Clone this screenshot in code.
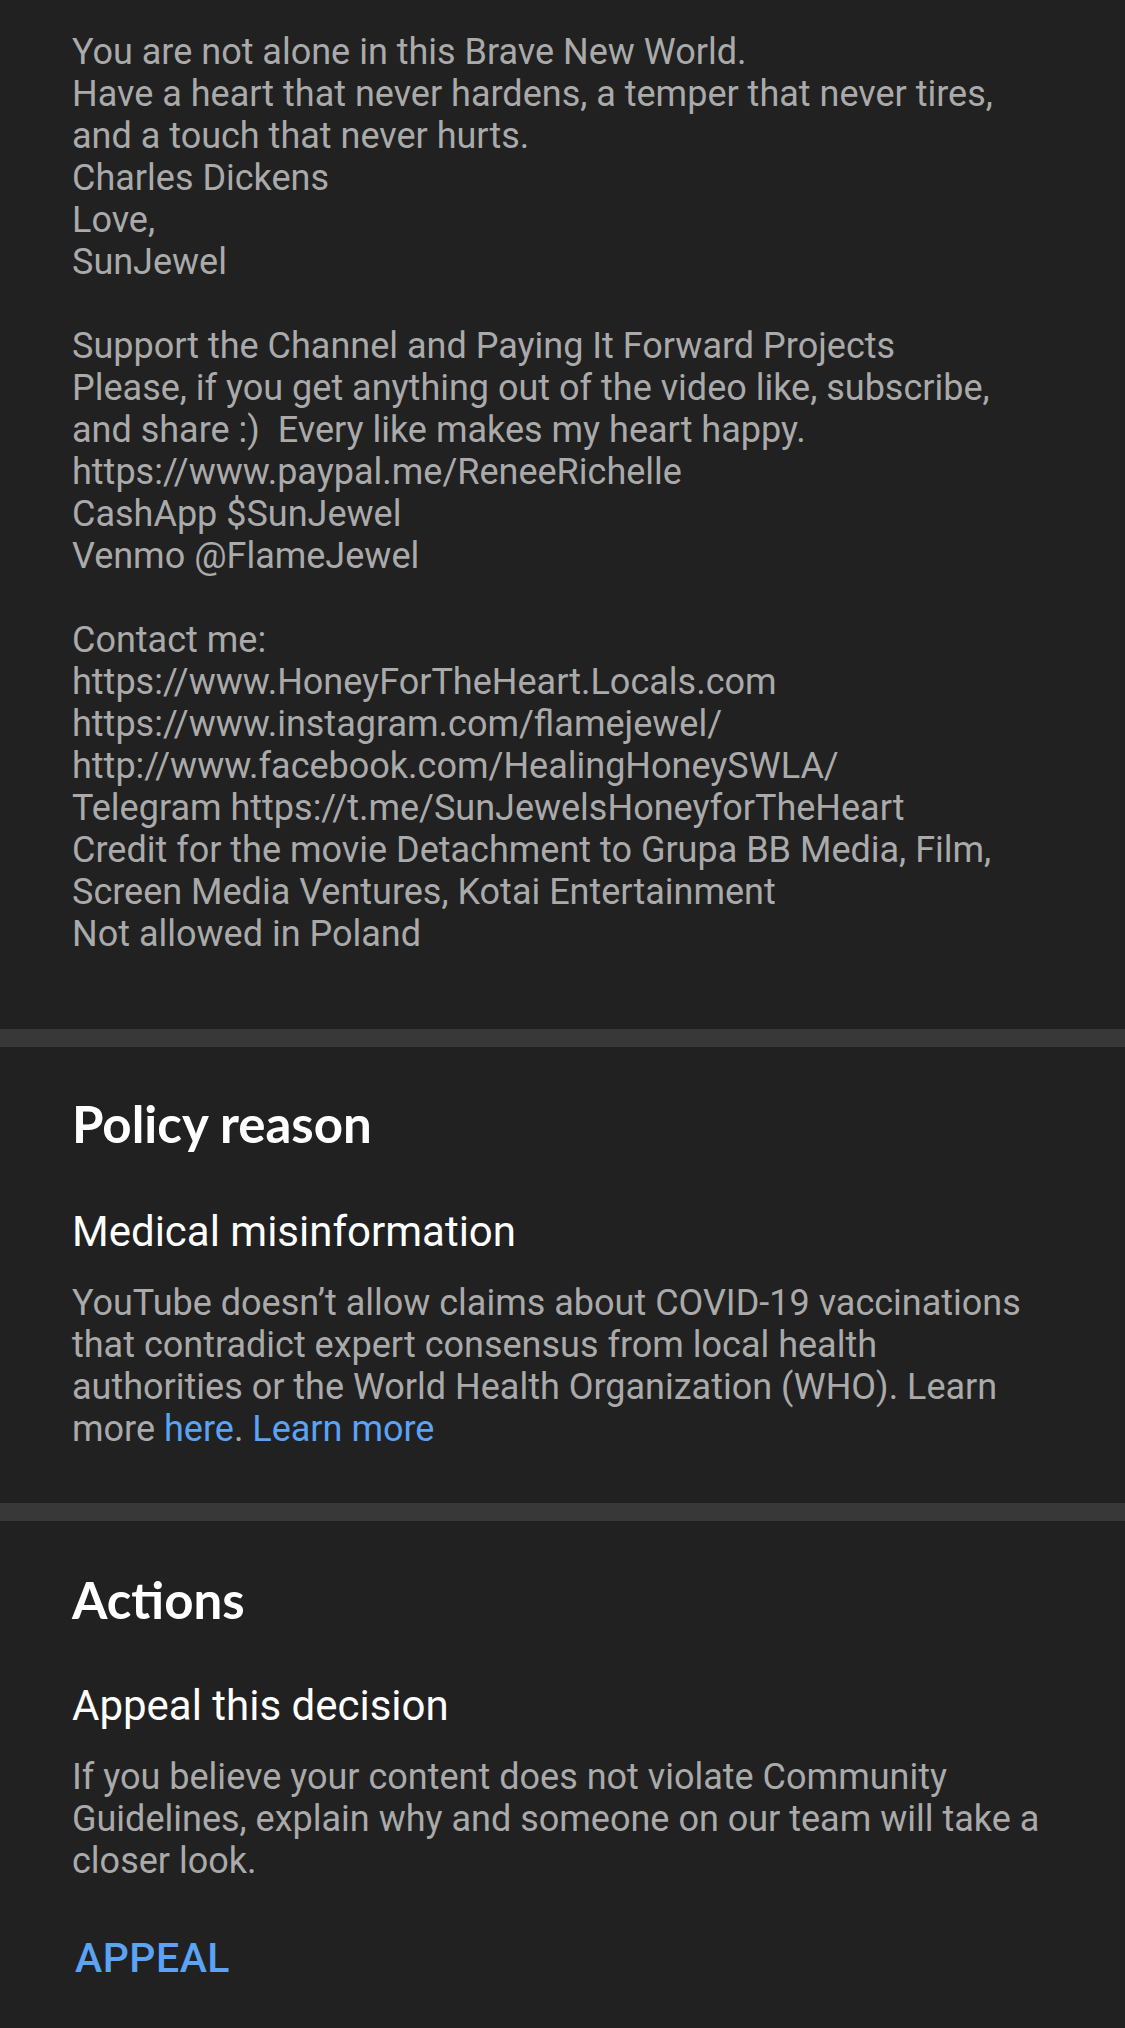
const description = [
  'You are not alone in this Brave New World.',
  'Have a heart that never hardens, a temper that never tires, and a touch that never hurts.',
  'Charles Dickens',
  'Love,',
  'SunJewel',
  '',
  'Support the Channel and Paying It Forward Projects',
  'Please, if you get anything out of the video like, subscribe, and share :)  Every like makes my heart happy.',
  'https://www.paypal.me/ReneeRichelle',
  'CashApp $SunJewel',
  'Venmo @FlameJewel',
  '',
  'Contact me:',
  'https://www.HoneyForTheHeart.Locals.com',
  'https://www.instagram.com/flamejewel/',
  'http://www.facebook.com/HealingHoneySWLA/',
  'Telegram https://t.me/SunJewelsHoneyforTheHeart',
  'Credit for the movie Detachment to Grupa BB Media, Film, Screen Media Ventures, Kotai Entertainment',
  'Not allowed in Poland',
];

function Divider() {
  return <div className="h-[18px] bg-[#383838]" />;
}

function SectionTitle({ children }: { children: React.ReactNode }) {
  return (
    <h2 className="font-['Lato',sans-serif] font-bold text-[51px] leading-[56px] text-white">
      {children}
    </h2>
  );
}

export default function App() {
  return (
    <div className="min-h-[2028px] bg-[#212121] font-['Roboto',sans-serif]">
      {/* Video description */}
      <div className="pl-[72px] pr-[80px] pt-[31px] pb-[74px] text-[36px] leading-[42px] text-[#aaaaaa] whitespace-pre-wrap">
        {description.map((line, i) => (
          <div key={i} className="min-h-[42px]">{line}</div>
        ))}
      </div>

      <Divider />

      {/* Policy reason */}
      <div className="pl-[72px] pr-[80px] pt-[49px] pb-[53px]">
        <SectionTitle>Policy reason</SectionTitle>
        <h3 className="mt-[55px] text-[42px] leading-[50px] text-white">Medical misinformation</h3>
        <p className="mt-[25px] text-[36px] leading-[42px] text-[#aaaaaa]">
          YouTube doesn’t allow claims about COVID-19 vaccinations that contradict expert consensus from local health authorities or the World Health Organization (WHO). Learn more{' '}
          <a className="text-[#5aa3f5]">here</a>.{' '}
          <a className="text-[#5aa3f5]">Learn more</a>
        </p>
      </div>

      <Divider />

      {/* Actions */}
      <div className="pl-[72px] pr-[80px] pt-[51px] pb-[60px]">
        <SectionTitle>Actions</SectionTitle>
        <h3 className="mt-[53px] text-[42px] leading-[50px] text-white">Appeal this decision</h3>
        <p className="mt-[25px] text-[36px] leading-[42px] text-[#aaaaaa]">
          If you believe your content does not violate Community Guidelines, explain why and someone on our team will take a closer look.
        </p>
        <button className="mt-[52px] ml-[3px] text-[41px] leading-[48px] font-medium text-[#5aa3f5] tracking-[0.5px]">
          APPEAL
        </button>
      </div>
    </div>
  );
}
